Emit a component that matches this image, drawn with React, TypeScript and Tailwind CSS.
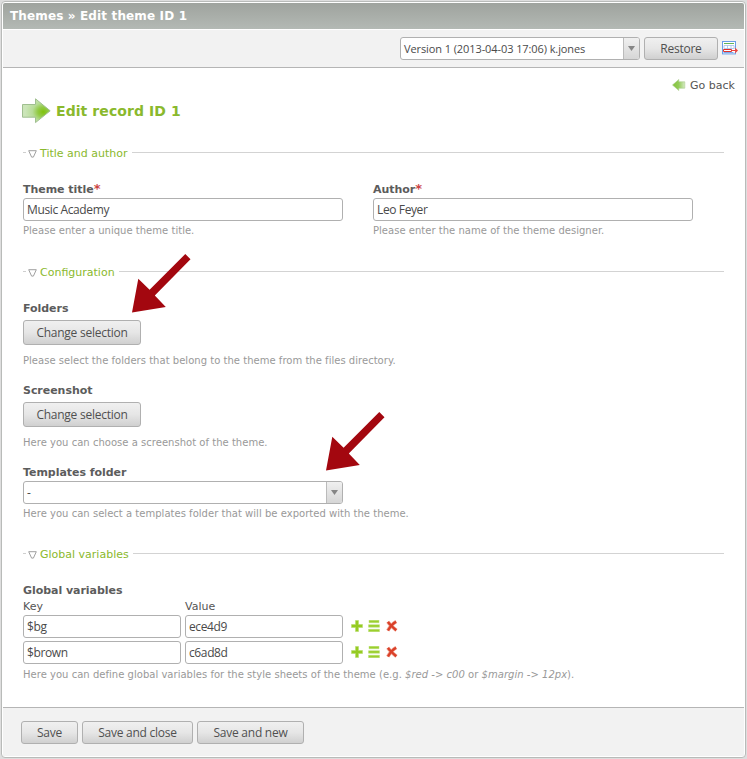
import type { ReactNode } from 'react';

const Verdana = 'font-["DejaVu_Sans",sans-serif]';

function Legend({ children, className }: { children: string; className: string }) {
  return (
    <div className={`flex h-[14px] items-center ${className}`}>
      <span className="-mt-[2px] h-px w-[3px] bg-[#cfcfcf]" />
      <svg className="ml-[2px] mt-px shrink-0" width="9" height="8" viewBox="0 0 9 8">
        <path d="M0.7 0.7h7.6L5.4 7.1H3.6z" fill="#fff" stroke="#a0a0a0" />
      </svg>
      <span className="ml-[3px] mt-[2px] whitespace-nowrap text-[11px] leading-[14px] text-[#8ab92d]">{children}</span>
      <span className="-mt-[2px] ml-[4px] h-px flex-1 bg-[#d3d3d3]" />
    </div>
  );
}

function Label({ children, required, className = 'h-[16px]' }: { children: string; required?: boolean; className?: string }) {
  return (
    <div className={`whitespace-nowrap text-[11px] font-bold leading-[16px] tracking-[-0.04px] text-[#5c5c5c] ${className}`}>
      {children}
      {required && <span className="text-[13px] leading-[10px] text-[#cc4444]">*</span>}
    </div>
  );
}

function Hint({ children, className = 'h-[18px] leading-[20px]' }: { children: ReactNode; className?: string }) {
  return <div className={`whitespace-nowrap text-[10px] tracking-[0.025px] text-[#999] ${className}`}>{children}</div>;
}

function Field({ value, className }: { value: string; className: string }) {
  return (
    <div className={`h-[23px] whitespace-nowrap rounded-[3px] border border-[#b0b0b0] bg-white pl-[3px] font-["Open_Sans",sans-serif] text-[12px] leading-[22px] tracking-[-0.38px] text-[#4a4a4a] ${className}`}>
      {value}
    </div>
  );
}

function Button({ children, className }: { children: string; className: string }) {
  return (
    <button className={`shrink-0 whitespace-nowrap rounded-[3px] border border-[#b0b0b0] bg-linear-to-b from-[#f0f0f0] via-[#e6e6e6] to-[#d0d0d0] text-center font-["Open_Sans",sans-serif] text-[12px] leading-[20px] tracking-[-0.25px] text-[#505050] ${className}`}>
      {children}
    </button>
  );
}

function Select({ value, className }: { value: string; className: string }) {
  return (
    <div className={`flex h-[23px] overflow-hidden rounded-[3px] border border-[#b0b0b0] bg-white font-["Open_Sans",sans-serif] leading-[22px] text-[#4a4a4a] ${className}`}>
      <span className="flex-1 whitespace-nowrap pl-[3px]">{value}</span>
      <span className="flex w-[16px] items-center justify-center border-l border-[#bbb] bg-linear-to-b from-[#f0f0f0] to-[#d6d6d6]">
        <svg width="7" height="5" viewBox="0 0 7 5"><path d="M0 0h7L3.5 5z" fill="#858585" /></svg>
      </span>
    </div>
  );
}

function BigArrow() {
  return (
    <svg width="29" height="26" viewBox="0 0 29 26">
      <defs>
        <radialGradient id="big" cx="0.75" cy="0.55" r="0.65">
          <stop offset="0" stopColor="#7fc20c" />
          <stop offset="0.3" stopColor="#92ca45" />
          <stop offset="0.6" stopColor="#b7dc97" />
          <stop offset="1" stopColor="#cbe5b8" />
        </radialGradient>
      </defs>
      <path d="M0.5 6.5h13V0.8L28.2 12.8 13.5 24.6v-5.4h-13z" fill="url(#big)" stroke="#a0bf90" />
    </svg>
  );
}

function BackArrow() {
  return (
    <svg width="14" height="12" viewBox="0 0 14 12">
      <defs>
        <linearGradient id="back">
          <stop offset="0" stopColor="#83c33b" />
          <stop offset="0.5" stopColor="#93cb58" />
          <stop offset="1" stopColor="#d5eac4" />
        </linearGradient>
      </defs>
      <path d="M0.5 6L6.8 0.5V2.8h6v6.4h-6v2.3z" fill="url(#back)" stroke="#a9cd8b" strokeWidth="0.6" />
    </svg>
  );
}

function VersionsIcon() {
  return (
    <svg width="16" height="14" viewBox="0 0 16 14">
      <rect x="0.5" y="0.5" width="13" height="12.4" fill="#fff" stroke="#6a9de6" />
      <path d="M2 2.5h10" stroke="#62b558" />
      <path d="M2 4.5h10v3H2zM5.5 4.5v4M9 4.5v4" fill="none" stroke="#a3bfe8" strokeWidth="0.8" />
      <path d="M1.5 11.5h10" stroke="#7da9ea" />
      <path d="M1.5 8.5h8v2h-8z" fill="#fff" stroke="#e0322b" />
      <path d="M9.5 9.5h5.8M13 7.4l2.2 2.1L13 11.6" fill="none" stroke="#f0423b" strokeWidth="1.2" />
    </svg>
  );
}

function RowIcons() {
  return (
    <div className="-mt-px flex items-center pl-[8px]">
      <svg width="12" height="12" viewBox="0 0 12 12">
        <path d="M4.5 0.5h3v4h4v3h-4v4h-3v-4h-4v-3h4z" fill="#95cb22" stroke="#b7dc6c" strokeWidth="0.6" />
      </svg>
      <svg className="ml-[5px]" width="12" height="12" viewBox="0 0 12 12">
        <path d="M1 .2h10v2.5H1zM.5 4.7h11v2.5H.5zM.5 9.3h11v2.5H.5z" fill="#9bcf2d" stroke="#bce07a" strokeWidth="0.5" />
      </svg>
      <svg className="ml-[6px]" width="12" height="12" viewBox="0 0 11 11">
        <path d="M1.6 1.6Q4 5 9.6 9.6M9.4 1.4Q5 4 1.6 9.8" fill="none" stroke="#f0a392" strokeWidth="3.3" />
        <path d="M1.8 1.8Q4 5 9.4 9.4M9.2 1.6Q5 4 1.8 9.6" fill="none" stroke="#da4029" strokeWidth="2.1" />
      </svg>
    </div>
  );
}

function Pointer({ className }: { className: string }) {
  return (
    <svg className={`absolute ${className}`} width="60" height="60" viewBox="0 0 60 60">
      <path d="M0 59.5L6.3 25.8l11.3 11L53.3 1l5.2 5.3-35.7 36.2 11 11.5z" fill="#a3070f" />
    </svg>
  );
}

export default function App() {
  return (
    <div className={`relative h-[759px] w-[747px] overflow-hidden bg-[#dedede] p-px ${Verdana}`}>
      <div className="flex h-[757px] w-[745px] flex-col overflow-hidden rounded-[4px] border border-[#b9bbb9] bg-white">
        <header className="mx-px mt-px h-[26px] shrink-0 rounded-t-[2px] bg-linear-to-b from-[#9fa39e] to-[#b3b9b4] pl-[7px] text-[12px] font-bold leading-[26px] tracking-[0.14px] text-white">
          Themes » Edit theme ID 1
        </header>
        <div className="mx-px mt-px flex h-[38px] shrink-0 border-b border-[#b5b5b5] bg-[#f2f2f2] pl-[397px] pt-[7px]">
          <Select value="Version 1 (2013-04-03 17:06) k.jones" className="w-[240px] text-[11px] tracking-[-0.09px]" />
          <Button className="ml-[4px] h-[23px] w-[74px]">Restore</Button>
          <div className="ml-[4px] mt-[4px]"><VersionsIcon /></div>
        </div>
        <main className="h-[639px] shrink-0 pl-[21px] pr-[21px]">
          <div className="-mr-[11px] flex h-[24px] items-end justify-end text-[11px] leading-[14px] text-[#555]">
            <span className="mb-[1px] mr-[4px]"><BackArrow /></span>
            <span className="-mb-px">Go back</span>
          </div>
          <h1 className="mt-[6px] flex h-[26px] items-center text-[14px] font-bold leading-[26px] tracking-[0.08px] text-[#8ab92d]">
            <span className="-ml-px mr-[5px]"><BigArrow /></span>Edit record ID 1
          </h1>
          <Legend className="mt-[22px]">Title and author</Legend>
          <div className="mt-[22px] flex gap-[30px]">
            <div>
              <Label required>Theme title</Label>
              <Field value="Music Academy" className="w-[320px]" />
              <Hint>Please enter a unique theme title.</Hint>
            </div>
            <div>
              <Label required>Author</Label>
              <Field value="Leo Feyer" className="w-[320px]" />
              <Hint>Please enter the name of the theme designer.</Hint>
            </div>
          </div>
          <Legend className="mt-[26px]">Configuration</Legend>
          <section className="mt-[22px]">
            <Label className="h-[19px]">Folders</Label>
            <Button className="block h-[25px] w-[118px]">Change selection</Button>
            <Hint className="mt-[7px] h-[16px] leading-[18px]">Please select the folders that belong to the theme from the files directory.</Hint>
          </section>
          <section className="mt-[15px]">
            <Label className="h-[19px]">Screenshot</Label>
            <Button className="block h-[25px] w-[118px]">Change selection</Button>
            <Hint className="mt-[7px] h-[16px] leading-[18px]">Here you can choose a screenshot of the theme.</Hint>
          </section>
          <section className="mt-[15px]">
            <Label>Templates folder</Label>
            <Select value="-" className="w-[320px] text-[12px]" />
            <Hint>Here you can select a templates folder that will be exported with the theme.</Hint>
          </section>
          <Legend className="mt-[25px]">Global variables</Legend>
          <section className="mt-[22px]">
            <Label className="h-[14px]">Global variables</Label>
            <div className="mt-[2px] flex h-[16px] text-[11px] leading-[16px] text-[#555]">
              <span className="w-[162px]">Key</span>
              <span>Value</span>
            </div>
            <div className="flex flex-col gap-[3px]">
              {[['$bg', 'ece4d9'], ['$brown', 'c6ad8d']].map(([key, value]) => (
                <div key={key} className="flex">
                  <Field value={key} className="w-[158px]" />
                  <Field value={value} className="ml-[4px] w-[158px]" />
                  <RowIcons />
                </div>
              ))}
            </div>
            <Hint className="mt-px h-[18px] leading-[20px]">
              Here you can define global variables for the style sheets of the theme (e.g. <i>$red -&gt; c00</i> or <i>$margin -&gt; 12px</i>).
            </Hint>
          </section>
        </main>
        <footer className="mx-px mb-px flex flex-1 gap-[4px] border-t border-[#b5b5b5] bg-[#f2f2f2] pl-[18px] pt-[13px]">
          <Button className="h-[23px] w-[57px]">Save</Button>
          <Button className="h-[23px] w-[111px]">Save and close</Button>
          <Button className="h-[23px] w-[107px]">Save and new</Button>
        </footer>
      </div>
      <Pointer className="left-[132px] top-[253px]" />
      <Pointer className="left-[326px] top-[411px]" />
    </div>
  );
}
